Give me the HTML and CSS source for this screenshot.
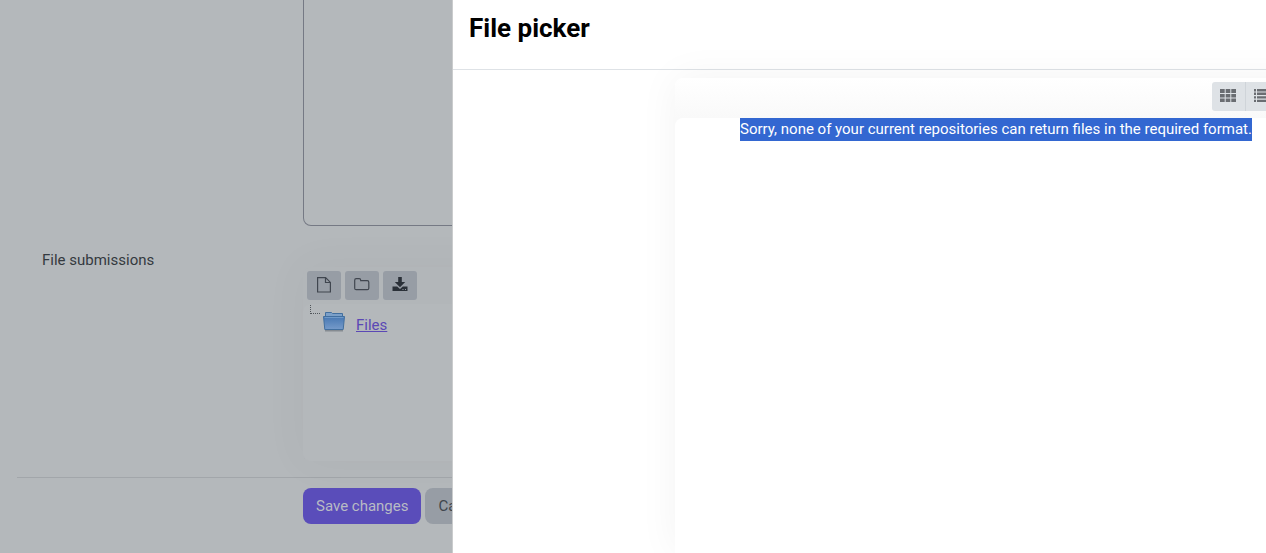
FILE: index.html
```html
<!DOCTYPE html>
<html lang="en">
<head>
    <meta charset="UTF-8">
    <meta name="viewport" content="width=device-width, initial-scale=1.0">
    <title>File picker</title>
    <link rel="stylesheet" href="styles.css">
</head>
<body>
    <form class="submission">
        <div class="row row-text">
            <label class="row-label" for="onlineText"></label>
            <textarea class="online-text" id="onlineText"></textarea>
        </div>
        <div class="row">
            <span class="row-label" id="filesLabel">File submissions</span>
            <div class="filemanager" role="group" aria-labelledby="filesLabel">
                <div class="fm-toolbar">
                    <button type="button" class="tool" aria-label="Add">
                        <svg width="16" height="18" viewBox="0 0 16 18" fill="none" stroke="#40464f" stroke-width="1.2"><path d="M1.600 1.600h8l4.800 4.800v9.600H1.600zM9.500 1.600v4.900h4.900"/></svg>
                    </button>
                    <button type="button" class="tool" aria-label="Create folder">
                        <svg width="16" height="18" viewBox="0 0 16 18" fill="none" stroke="#40464f" stroke-width="1.2"><path d="M.7 4.200q0-1.500 1.500-1.500h3q1.500 0 1.500 1.500v.5h6.600q1.500 0 1.500 1.500v6q0 1.500-1.500 1.500H2.200q-1.500 0-1.500-1.500z"/></svg>
                    </button>
                    <button type="button" class="tool" aria-label="Download all">
                        <svg width="16" height="18" viewBox="0 0 16 18" fill="#2a3038"><path d="M6.200 1h3.600v5h3.400L8 11.200 2.800 6h3.400z"/><path fill-rule="evenodd" d="M.5 10.500h4.700L8 13l2.800-2.500h4.700V15H.5zM10.500 13v1h1v-1zm2.500 0v1h1v-1z"/></svg>
                    </button>
                </div>
                <div class="fm-content">
                    <span class="branch"></span>
                    <svg class="folder" width="24" height="22" viewBox="0 0 24 22">
                        <defs>
                            <linearGradient id="folderFill" x1="0" y1="0" x2="0" y2="1">
                                <stop offset="0" stop-color="#4777b2"/>
                                <stop offset="1" stop-color="#769bca"/>
                            </linearGradient>
                        </defs>
                        <path d="M3 19.500h18" stroke="#858b91" stroke-width="2"/>
                        <path d="M3.500 7V1.500h6l1 1h10V7z" fill="#7b9fc8" stroke="#426f9f"/>
                        <path d="M1.500 5.500h21L21.200 18.500H2.800z" fill="url(#folderFill)" stroke="#426f9f"/>
                        <path d="M2.500 6.500h19" stroke="#6f99c8"/>
                    </svg>
                    <a href="#">Files</a>
                </div>
            </div>
        </div>
        <div class="actions">
            <button type="submit" class="btn btn-primary">Save changes</button>
            <button type="button" class="btn btn-secondary">Cancel</button>
        </div>
    </form>

    <div class="picker" role="dialog" aria-labelledby="pickerTitle">
        <div class="picker-header">
            <h1 id="pickerTitle">File picker</h1>
        </div>
        <div class="picker-body">
            <div class="repositories"></div>
            <div class="repository">
                <div class="view-toolbar">
                    <button type="button" class="view" aria-label="Icons">
                        <svg width="16" height="14" viewBox="0 0 16 14" fill="#6a6d72"><path d="M0 0h4.700v4H0zM5.700 0h4.600v4H5.700zM11.300 0H16v4h-4.700zM0 5h4.700v3.500H0zM5.700 5h4.600v3.500H5.700zM11.300 5H16v3.500h-4.700zM0 9.500h4.700V13H0zM5.700 9.500h4.600V13H5.700zM11.300 9.500H16V13h-4.700z"/></svg>
                    </button>
                    <button type="button" class="view" aria-label="List">
                        <svg width="16" height="14" viewBox="0 0 16 14" fill="#6a6d72"><path d="M0 0h2v2.400H0zM3 0h13v2.400H3zM0 3.600h2V6H0zM3 3.600h13V6H3zM0 7.200h2v2.400H0zM3 7.200h13v2.400H3zM0 10.700h2V13H0zM3 10.700h13V13H3z"/></svg>
                    </button>
                    <button type="button" class="view" aria-label="Tree">
                        <svg width="16" height="14" viewBox="0 0 16 14" fill="#6a6d72"><path d="M0 2h6l1 1h6v9H0z"/></svg>
                    </button>
                </div>
                <div class="repository-content">
                    <span class="selected">Sorry, none of your current repositories can return files in the required format.</span>
                </div>
            </div>
        </div>
    </div>
</body>
</html>
```
FILE: styles.css
```css
* {
    box-sizing: border-box;
}
body {
    margin: 0;
    height: 100vh;
    overflow: hidden;
    background: #b4b8bb;
    font-family: Roboto, sans-serif;
    font-size: 15px;
    line-height: 23px;
    color: #343a40;
}
button {
    font-family: inherit;
    border: none;
    cursor: pointer;
}
svg {
    display: block;
}
.submission {
    padding: 0 16px;
}
.row {
    display: grid;
    grid-template-columns: 287px 1fr;
    margin-bottom: 16px;
}
.row-text {
    margin-bottom: 41px;
}
.row-label {
    padding-left: 26px;
    margin-top: -18px;
}
.online-text {
    width: 100%;
    height: 226px;
    resize: none;
    background: transparent;
    border: 1px solid #757984;
    border-top: none;
    border-radius: 0 0 8px 8px;
}
.filemanager {
    border-radius: 8px;
    background: #b2b6b9;
    box-shadow: 0 0 40px rgba(80, 90, 90, 0.06);
}
.fm-toolbar {
    display: flex;
    gap: 4px;
    padding: 4px;
}
.tool {
    display: flex;
    align-items: center;
    justify-content: center;
    width: 34px;
    height: 29px;
    padding: 0 0 2px;
    border-radius: 3px;
    background: #979da5;
}
.fm-content {
    display: flex;
    align-items: flex-start;
    height: 157px;
    padding: 1px 7px;
    border-radius: 8px;
    background: #b4b8bb;
}
.branch {
    width: 10px;
    height: 9px;
    border-left: 1px dotted #50555a;
    border-bottom: 1px dotted #50555a;
}
.folder {
    margin: 6px 10px 0 2px;
}
.fm-content a {
    margin-top: 9px;
    color: #5b48b5;
}
.actions {
    display: flex;
    gap: 4px;
    margin-left: 1px;
    padding: 10px 0 0 286px;
    border-top: 1px solid #a2a6aa;
}
.btn {
    height: 36px;
    padding: 0 13px;
    border-radius: 8px;
    font-size: 15px;
}
.btn-primary {
    background: #5a4dba;
    color: #b8bbc4;
}
.btn-secondary {
    background: #979da5;
    color: #40464d;
}

/* dialog over the form */
.picker {
    position: absolute;
    top: 0;
    right: 0;
    bottom: 0;
    left: 452px;
    display: flex;
    flex-direction: column;
    overflow: hidden;
    background: #fff;
    border-left: 1px solid #cacccd;
}
.picker-header {
    padding: 12px 16px 25px;
    border-bottom: 1px solid #dee2e6;
}
.picker-header h1 {
    margin: 0;
    font-size: 26px;
    line-height: 32px;
    font-weight: 700;
    color: #000;
}
.picker-body {
    display: flex;
    flex: 1;
    padding-top: 8px;
}
.repositories {
    flex: 0 0 222px;
}
.repository {
    display: flex;
    flex: 1;
    flex-direction: column;
    margin-right: -51px;
    border-radius: 8px;
    background: linear-gradient(#fff, #f9f9f9 40px);
    box-shadow: 0 0 40px rgba(0, 0, 0, 0.05);
}
.view-toolbar {
    display: flex;
    justify-content: flex-end;
    height: 40px;
    padding: 4px;
}
.view {
    display: flex;
    align-items: center;
    justify-content: center;
    width: 34px;
    height: 29px;
    padding: 0 1px 2px 0;
    background: #dee2e6;
    border-left: 1px solid #cfd4d9;
}
.view:first-child {
    width: 33px;
    border-left: none;
    border-radius: 3px 0 0 3px;
}
.view:last-child {
    border-radius: 0 3px 3px 0;
}
.repository-content {
    flex: 1;
    border-radius: 8px 8px 0 0;
    background: #fff;
    text-align: center;
}
.selected {
    display: inline-block;
    background: #3367d1;
    color: #fff;
    white-space: nowrap;
}
```
